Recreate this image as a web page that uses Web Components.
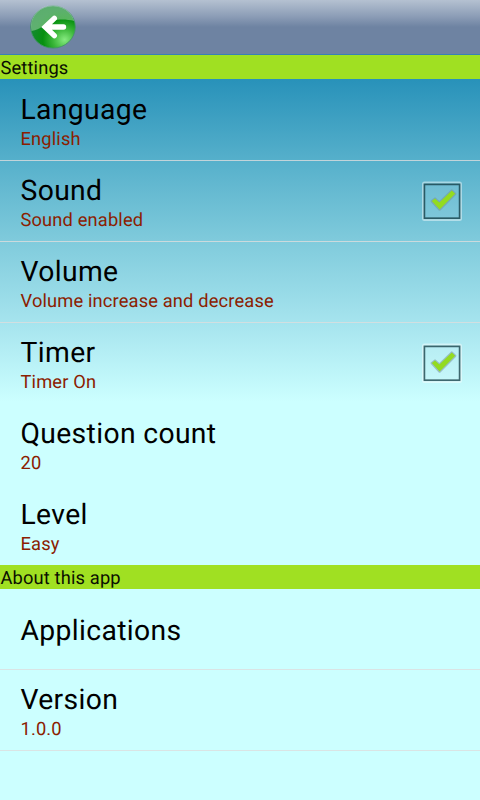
<!DOCTYPE html>
<html lang="en">
<head>
<meta charset="utf-8">
<title>Settings</title>
<style>
    body {
        margin: 0;
        font-family: Roboto, "Liberation Sans", sans-serif;
        text-rendering: geometricPrecision;
    }
</style>
</head>
<body>
<settings-screen>
    <title-bar slot="header"></title-bar>
    <settings-section label="Settings" spaced>
        <settings-row label="Language">English</settings-row>
        <settings-row label="Sound">Sound enabled<check-box slot="control"></check-box></settings-row>
        <settings-row label="Volume">Volume increase and decrease</settings-row>
        <settings-row label="Timer" plain>Timer On<check-box slot="control"></check-box></settings-row>
        <settings-row label="Question count" plain>20</settings-row>
        <settings-row label="Level" last>Easy</settings-row>
    </settings-section>
    <settings-section label="About this app">
        <settings-row label="Applications"></settings-row>
        <settings-row label="Version">1.0.0</settings-row>
    </settings-section>
</settings-screen>

<script>
const makeTemplate = (html) => {
    const template = document.createElement("template");
    template.innerHTML = html;
    return template;
};

class BaseElement extends HTMLElement {
    constructor() {
        super();
        this.attachShadow({mode: "open"});
        this.shadowRoot.append(this.constructor.template.content.cloneNode(true));
    }

    connectedCallback() {
        const label = this.shadowRoot.getElementById("label");
        if (label) {
            label.textContent = this.getAttribute("label");
        }
    }
}

class SettingsScreen extends BaseElement {
    static template = makeTemplate(`
        <style>
            :host {
                display: flex;
                flex-direction: column;
                width: 480px;
                height: 800px;
                overflow: hidden;
                background: linear-gradient(#248fb8 72px, #56b0cb 161px, #80cbdc 242px, #a6e4ee 323px, #ccffff 402px);
            }
        </style>
        <slot name="header"></slot>
        <slot></slot>
    `);
}

class TitleBar extends BaseElement {
    static template = makeTemplate(`
        <style>
            :host {
                display: flex;
                align-items: center;
                box-sizing: border-box;
                height: 55px;
                padding-left: 30px;
                border-bottom: 1px solid #3981b5;
                background: linear-gradient(#b5c1d1, #8d9eb7 16px, #6e83a2 27px, #6e83a2);
            }

            svg {
                display: block;
                width: 46px;
                height: 44px;
            }
        </style>
        <svg viewBox="0 0 46 44">
            <defs>
                <radialGradient id="ball" cx="0.76" cy="0.8" r="0.72">
                    <stop offset="0" stop-color="#86ea80"/>
                    <stop offset="0.35" stop-color="#3db83b"/>
                    <stop offset="0.68" stop-color="#06900f"/>
                    <stop offset="1" stop-color="#128a2c"/>
                </radialGradient>
                <linearGradient id="gloss" x1="0" y1="0" x2="0.6" y2="1">
                    <stop offset="0" stop-color="#fff" stop-opacity="0.3"/>
                    <stop offset="1" stop-color="#fff" stop-opacity="0.34"/>
                </linearGradient>
            </defs>
            <ellipse cx="23" cy="22" rx="22.3" ry="21.1" fill="url(#ball)" stroke="#439369" stroke-width="0.9"/>
            <path d="M1.6 26 A21.7 20.6 0 0 1 44.2 16 C37 14 29 14 23 15.5 C14 18 11 25 1.6 26Z" fill="url(#gloss)"/>
            <path d="M24.3 13.4 L15.2 22 L24.3 30.6 M15.5 22 H33.5" fill="none" stroke="#fff" stroke-width="5.4" stroke-linecap="round" stroke-linejoin="miter"/>
        </svg>
    `);
}

class SettingsSection extends BaseElement {
    static template = makeTemplate(`
        <style>
            :host {
                display: block;
            }

            h2 {
                margin: 0;
                height: 24px;
                padding-left: 0.5px;
                line-height: 27px;
                font-size: 18.3px;
                font-weight: 400;
                letter-spacing: 0.15px;
                color: #0a0f00;
                background: #a0e022;
            }

            :host([spaced]) h2 {
                margin-bottom: 1px;
            }
        </style>
        <h2 id="label"></h2>
        <slot></slot>
    `);
}

class SettingsRow extends BaseElement {
    static template = makeTemplate(`
        <style>
            :host {
                display: flex;
                align-items: center;
                box-sizing: border-box;
                height: 81px;
                padding: 0 18px 0 20.5px;
                border-bottom: 1px solid rgba(221, 221, 221, 0.8);
            }

            :host([plain]) {
                border-color: transparent;
            }

            :host([last]) {
                height: 80px;
                border-bottom: 0;
            }

            .text {
                flex: 1;
                padding-top: 4px;
            }

            #label {
                line-height: 34px;
                font-size: 28.3px;
                letter-spacing: 0.35px;
                color: #000;
            }

            .summary {
                line-height: 25px;
                font-size: 18.3px;
                letter-spacing: 0.15px;
                color: #8b2000;
            }
        </style>
        <div class="text">
            <div id="label"></div>
            <div class="summary"><slot></slot></div>
        </div>
        <slot name="control"></slot>
    `);

    connectedCallback() {
        super.connectedCallback();
        // No summary line, so the label is centered alone
        if (!this.textContent.trim()) {
            this.shadowRoot.querySelector(".summary").remove();
        }
    }
}

class CheckBox extends BaseElement {
    static template = makeTemplate(`
        <style>
            :host {
                display: block;
            }

            svg {
                display: block;
                width: 40px;
                height: 40px;
            }
        </style>
        <svg viewBox="0 0 40 40">
            <rect x="1" y="1.6" width="38" height="37.4" rx="1.5" fill="none" stroke="#fff" stroke-opacity="0.45" stroke-width="2"/>
            <rect x="2.4" y="3.4" width="35.2" height="33.8" fill="#fff" fill-opacity="0.08" stroke="#123840" stroke-opacity="0.75" stroke-width="1.7"/>
            <path d="M9.8 20.1 L13 17.6 L17.4 21.6 L29.8 9.6 L33.2 12.8 L17.6 28.6Z" fill="#93db20" stroke="#77969a" stroke-opacity="0.55" stroke-width="2.4" stroke-linejoin="round" paint-order="stroke"/>
        </svg>
    `);
}

customElements.define("settings-screen", SettingsScreen);
customElements.define("title-bar", TitleBar);
customElements.define("settings-section", SettingsSection);
customElements.define("settings-row", SettingsRow);
customElements.define("check-box", CheckBox);
</script>
</body>
</html>
